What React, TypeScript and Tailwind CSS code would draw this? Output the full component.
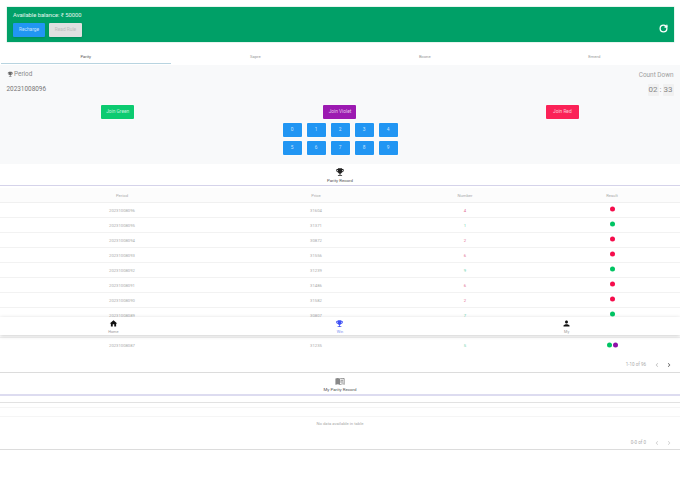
import React from "react";
import { MdChevronLeft, MdChevronRight, MdEmojiEvents, MdHome, MdMenuBook, MdPerson } from "react-icons/md";
import { RotateCw } from "lucide-react";

// the ninth row sits behind the bottom nav, so it stays empty
const records = [
  { period: "20231008096", price: "31604", num: "4", tone: "text-[#e0708f]", dots: ["bg-[#f50d4c]"] },
  { period: "20231008095", price: "31371", num: "1", tone: "text-[#6fd3ac]", dots: ["bg-[#00c463]"] },
  { period: "20231008094", price: "30872", num: "2", tone: "text-[#e0708f]", dots: ["bg-[#f50d4c]"] },
  { period: "20231008093", price: "31556", num: "6", tone: "text-[#e0708f]", dots: ["bg-[#f50d4c]"] },
  { period: "20231008092", price: "31239", num: "9", tone: "text-[#6fd3ac]", dots: ["bg-[#00c463]"] },
  { period: "20231008091", price: "31486", num: "6", tone: "text-[#e0708f]", dots: ["bg-[#f50d4c]"] },
  { period: "20231008090", price: "31582", num: "2", tone: "text-[#e0708f]", dots: ["bg-[#f50d4c]"] },
  { period: "20231008089", price: "30807", num: "7", tone: "text-[#6fd3ac]", dots: ["bg-[#00c463]"] },
  { period: "", price: "", num: "", tone: "", dots: [] },
  { period: "20231008087", price: "31235", num: "5", tone: "text-[#6fd3ac]", dots: ["bg-[#00c463]", "bg-[#8e12a8]"] },
];

const tabs = ["Parity", "Sapre", "Bcone", "Emerd"];

const colClass = "grid grid-cols-[244px_144px_154px_140px] text-center";

const JoinButton = ({ label, color }: { label: string; color: string }) => (
  <button className={`h-[14px] w-[33px] rounded-[1px] text-[4.8px] text-white/75 shadow-[0_0_0_0.5px_rgba(255,255,255,0.6)] ${color}`}>
    {label}
  </button>
);

export default function App() {
  return (
    <div className="relative h-[483px] w-[680px] overflow-hidden bg-white font-['Roboto',sans-serif]">
      <div className="px-[6.5px] pt-[6.5px]">
        <div className="flex h-[35px] items-end justify-between bg-[#00a067] pb-[5px] pl-[6.5px] pr-[5.5px] shadow-[0_0_0_0.5px_#cfe9de]">
          <div>
            <p className="mb-[3px] text-[5.8px] leading-[9px] text-white/90">Available balance: ₹ 50000</p>
            <div className="flex gap-[4px]">
              <button className="h-[14px] w-[32px] rounded-[1px] bg-[#2196f3] text-[4.8px] text-white/75 shadow-sm">Recharge</button>
              <button className="h-[14px] w-[33px] rounded-[1px] bg-[#e0e0e0] text-[4.8px] text-[#bdbdbd] shadow-sm">Read Rule</button>
            </div>
          </div>
          <RotateCw size={9} strokeWidth={3.5} className="mb-[4px] text-white" />
        </div>
      </div>

      <div className="flex h-[23px] pl-[1px] pt-[1px]">
        {tabs.map((t, i) => (
          <div key={t} className={`flex h-[21.5px] w-[169.5px] items-center justify-center pt-[8px] text-[4.2px] ${i === 0 ? "border-b border-[#b8d4e0] text-[#555]" : "text-[#999]"}`}>
            {t}
          </div>
        ))}
      </div>

      <div className="h-[99px] bg-[#f8f9fa] px-[6.5px] pt-[5px]">
        <div className="flex justify-between">
          <div>
            <p className="flex h-[10px] items-center gap-[1px] text-[6.4px] text-[#8a8a8a]">
              <MdEmojiEvents className="text-[6.5px] text-[#666]" />
              Period
            </p>
            <p className="mt-[4.5px] text-[6.4px] leading-[10px] text-[#777]">20231008096</p>
          </div>
          <div className="flex flex-col items-end">
            <p className="h-[10px] text-[6.4px] leading-[10px] text-[#a0a0a0]">Count Down</p>
            <p className="mt-[4px] flex gap-[1px] text-[8px] leading-[12px] text-[#888]">
              <span className="rounded-[1px] bg-[#f1f1f1] px-[1px]">02</span>
              <span>:</span>
              <span className="rounded-[1px] bg-[#f1f1f1] px-[1px]">33</span>
            </p>
          </div>
        </div>
        <div className="mt-[9.5px] grid grid-cols-3 justify-items-center">
          <JoinButton label="Join Green" color="bg-[#0ccb70]" />
          <JoinButton label="Join Violet" color="bg-[#9c1ab1]" />
          <JoinButton label="Join Red" color="bg-[#fb2257]" />
        </div>
        <div className="mx-auto mt-[4px] grid w-[115px] grid-cols-5 gap-x-[5px] gap-y-[4px]">
          {Array.from({ length: 10 }, (_, n) => (
            <button key={n} className="h-[14px] rounded-[1px] bg-[#2196f3] text-[4.8px] text-white/75 shadow-[0_0_0_0.5px_rgba(255,255,255,0.6)]">
              {n}
            </button>
          ))}
        </div>
      </div>

      <div className="flex h-[22px] flex-col items-center border-b border-[#d5d3ea] pt-[3px]">
        <MdEmojiEvents className="text-[10px] text-[#222]" />
        <p className="text-[4.4px] leading-[7px] text-[#555]">Parity Record</p>
      </div>

      <div className={`${colClass} mt-[2.5px] h-[15px] items-center border-b border-[#f0f0f0] bg-[#fcfcfc] pt-[1.5px] text-[4.2px] text-[#aaa]`}>
        <span>Period</span>
        <span>Price</span>
        <span>Number</span>
        <span>Result</span>
      </div>
      {records.map((r, idx) => (
        <div key={idx} className={`${colClass} h-[15px] items-center pt-[1.5px] text-[4.2px] text-[#aaa] ${idx < records.length - 1 ? "border-b border-[#f2f2f2]" : ""}`}>
          <span>{r.period}</span>
          <span>{r.price}</span>
          <span className={r.tone}>{r.num}</span>
          <span className="flex -translate-y-[1.5px] justify-center gap-[1px]">
            {r.dots.map((d, i) => (
              <i key={i} className={`size-[5px] rounded-full ${d}`} />
            ))}
          </span>
        </div>
      ))}

      <div className="flex h-[19.5px] items-center justify-end border-b border-[#dcdcdc] pr-[7px] pt-[6px] text-[4.5px] text-[#aaa]">
        <span className="mr-[7px]">1-10 of 96</span>
        <MdChevronLeft className="mr-[4px] text-[8px] text-[#bbb]" />
        <MdChevronRight className="text-[8px] text-[#555]" />
      </div>

      <div className="flex h-[23.3px] flex-col items-center border-b-2 border-[#dddcf0] pt-[3px]">
        <MdMenuBook className="text-[10px] text-[#888]" />
        <p className="text-[4.4px] leading-[7px] text-[#555]">My Parity Record</p>
      </div>
      <div className="h-[7.5px] border-b border-[#e2e2e2]" />
      <div className="h-[4.5px] border-b border-[#f5f5f5]" />
      <div className="h-[9px] border-b border-[#f5f5f5]" />
      <p className="h-[14px] pt-[3.5px] text-center text-[4.2px] leading-[7px] text-[#aaa]">No data available in table</p>
      <div className="flex h-[19.5px] items-center justify-end border-b border-[#dcdcdc] pr-[7px] pt-[6px] text-[4.5px] text-[#aaa]">
        <span className="mr-[7px]">0-0 of 0</span>
        <MdChevronLeft className="mr-[4px] text-[8px] text-[#ccc]" />
        <MdChevronRight className="text-[8px] text-[#ccc]" />
      </div>

      <nav className="absolute inset-x-0 top-[317px] grid h-[18px] grid-cols-3 bg-white shadow-[0_1px_4px_rgba(0,0,0,0.2)]">
        {[
          { label: "Home", Icon: MdHome, c: "text-[#111]", t: "text-[#999]" },
          { label: "Win", Icon: MdEmojiEvents, c: "text-[#3f51f5]", t: "text-[#7a92f0]" },
          { label: "My", Icon: MdPerson, c: "text-[#111]", t: "text-[#999]" },
        ].map(({ label, Icon, c, t }) => (
          <div key={label} className="flex flex-col items-center pt-[2px]">
            <Icon className={`text-[9px] ${c}`} />
            <span className={`text-[3.8px] leading-[7px] ${t}`}>{label}</span>
          </div>
        ))}
      </nav>
    </div>
  );
}
